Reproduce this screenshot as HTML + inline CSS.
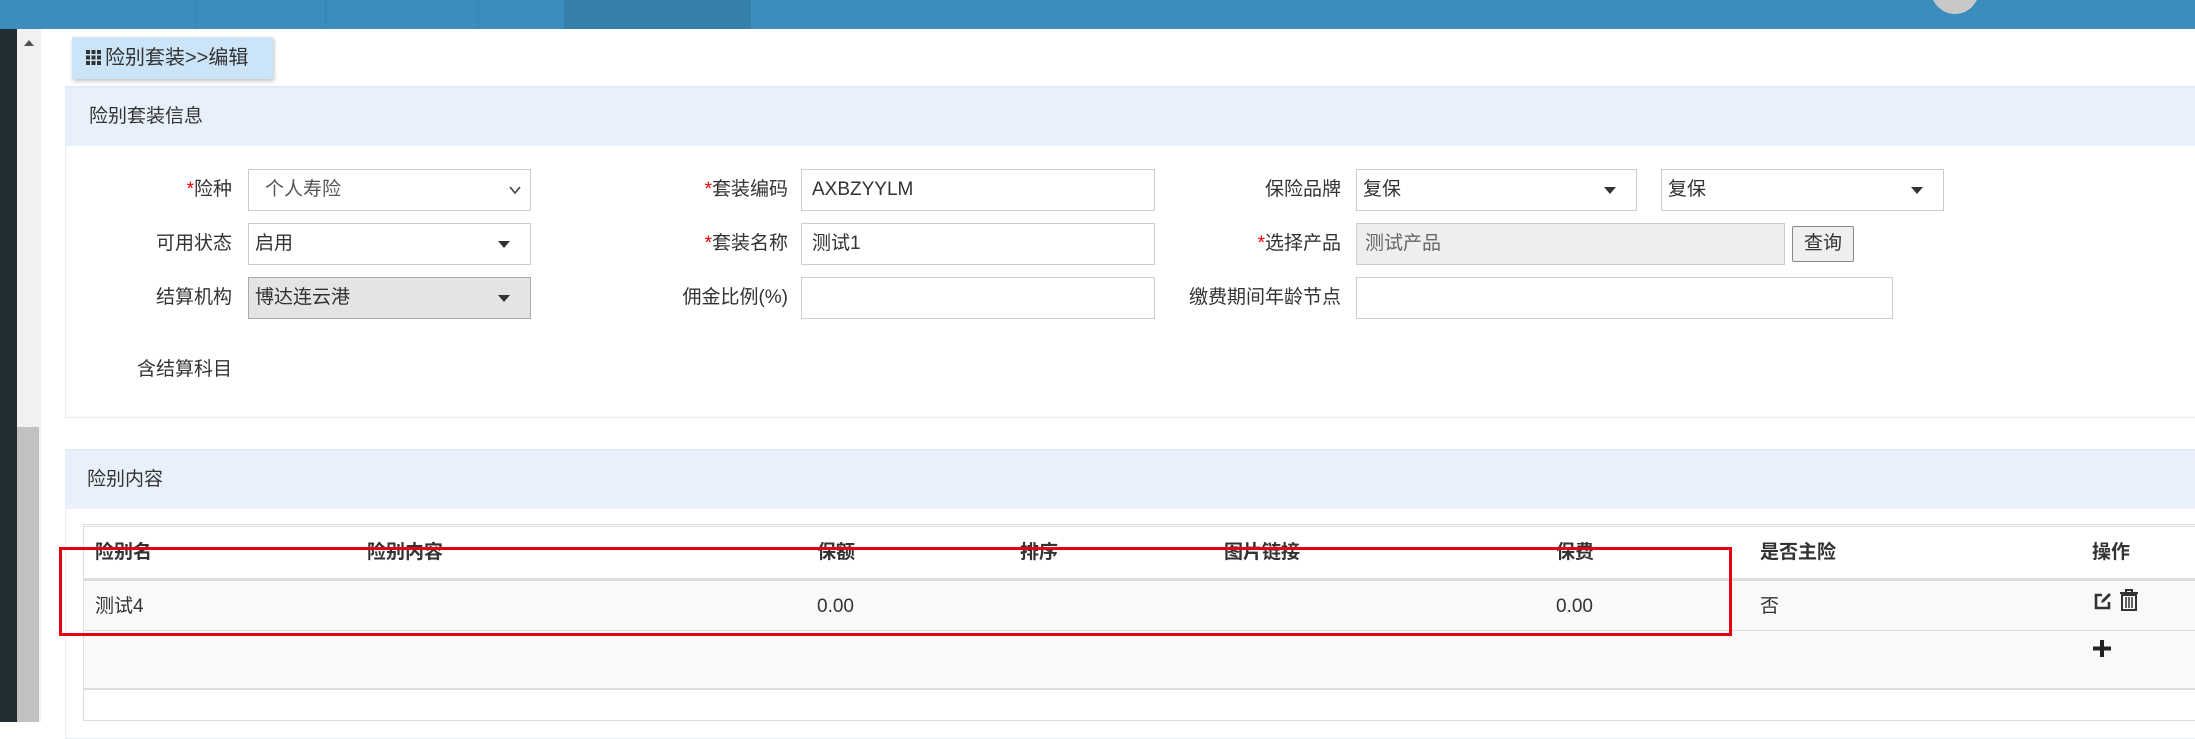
<!DOCTYPE html>
<html><head><meta charset="utf-8"><style>
*{margin:0;padding:0;box-sizing:border-box}
body{width:2195px;height:722px;overflow:hidden;background:#fff;position:relative;font-family:"Liberation Sans","Noto Sans CJK SC",sans-serif;font-size:19px;color:#333}
.a{position:absolute}
.lbl{position:absolute;text-align:right;white-space:nowrap;line-height:42px;height:42px}
.lbl i{color:#e00;font-style:normal}
.inp{position:absolute;height:42px;border:1px solid #ccc;background:#fff;line-height:40px;padding-left:14px;white-space:nowrap}
.tri{position:absolute;right:20px;top:17px;width:0;height:0;border-left:6px solid transparent;border-right:6px solid transparent;border-top:7px solid #333}
.th{position:absolute;top:541px;font-weight:bold;color:#333;line-height:24px}
.td{position:absolute;top:595px;line-height:24px}
</style></head><body>
<div class="a" style="left:0;top:0;width:2195px;height:29px;background:#3b8dbd"></div>
<div class="a" style="left:564px;top:0;width:187px;height:29px;background:#3580ab"></div>
<div class="a" style="left:195px;top:0;width:1px;height:29px;background:#3584b2"></div>
<div class="a" style="left:325px;top:0;width:1px;height:29px;background:#3584b2"></div>
<div class="a" style="left:478px;top:0;width:1px;height:29px;background:#3584b2"></div>
<div class="a" style="left:1930px;top:-40px;width:50px;height:54px;border-radius:50%;background:#c8c8c8"></div>
<div class="a" style="left:0;top:29px;width:17px;height:693px;background:#222d32"></div>
<div class="a" style="left:17px;top:29px;width:24px;height:693px;background:#f1f1f1"></div>
<div class="a" style="left:17px;top:427px;width:22px;height:295px;background:#c1c1c1"></div>
<div class="a" style="left:24px;top:40px;width:0;height:0;border-left:5px solid transparent;border-right:5px solid transparent;border-bottom:6px solid #505050"></div>

<div class="a" style="left:72px;top:37px;width:201px;height:42px;background:#cce4f8;box-shadow:1px 2px 4px rgba(0,0,0,.25);line-height:42px;padding-left:14px;font-size:20px;white-space:nowrap">
<svg width="15" height="15" style="vertical-align:-1px;margin-right:4px" viewBox="0 0 15 15" fill="#333"><rect x="0" y="0" width="4" height="4"/><rect x="5.5" y="0" width="4" height="4"/><rect x="11" y="0" width="4" height="4"/><rect x="0" y="5.5" width="4" height="4"/><rect x="5.5" y="5.5" width="4" height="4"/><rect x="11" y="5.5" width="4" height="4"/><rect x="0" y="11" width="4" height="4"/><rect x="5.5" y="11" width="4" height="4"/><rect x="11" y="11" width="4" height="4"/></svg>险别套装&gt;&gt;编辑</div>

<div class="a" style="left:65px;top:86px;width:2140px;height:332px;border:1px solid #e6eef6;border-top:2px solid #dfeaf5"></div>
<div class="a" style="left:66px;top:88px;width:2129px;height:58px;background:#e8f1fb;line-height:58px;padding-left:23px;font-size:19px">险别套装信息</div>

<div class="lbl" style="left:100px;width:132px;top:169px"><i>*</i>险种</div>
<div class="inp" style="left:248px;top:169px;width:283px;padding-left:16px;color:#555">个人寿险<svg class="a" style="right:8px;top:14px" width="14" height="12" viewBox="0 0 14 12"><path d="M2 3l5 6 5-6" stroke="#444" stroke-width="1.6" fill="none"/></svg></div>
<div class="lbl" style="left:100px;width:132px;top:223px">可用状态</div>
<div class="inp" style="left:248px;top:223px;width:283px;padding-left:6px">启用<span class="tri"></span></div>
<div class="lbl" style="left:100px;width:132px;top:277px">结算机构</div>
<div class="inp" style="left:248px;top:277px;width:283px;padding-left:6px;background:#e4e4e4;border-color:#aaa">博达连云港<span class="tri"></span></div>
<div class="lbl" style="left:100px;width:132px;top:349px">含结算科目</div>

<div class="lbl" style="left:620px;width:168px;top:169px"><i>*</i>套装编码</div>
<div class="inp" style="left:801px;top:169px;width:354px;padding-left:10px">AXBZYYLM</div>
<div class="lbl" style="left:620px;width:168px;top:223px"><i>*</i>套装名称</div>
<div class="inp" style="left:801px;top:223px;width:354px;padding-left:10px">测试1</div>
<div class="lbl" style="left:620px;width:168px;top:277px">佣金比例(%)</div>
<div class="inp" style="left:801px;top:277px;width:354px"></div>

<div class="lbl" style="left:1160px;width:181px;top:169px">保险品牌</div>
<div class="inp" style="left:1356px;top:169px;width:281px;padding-left:6px">复保<span class="tri"></span></div>
<div class="inp" style="left:1661px;top:169px;width:283px;padding-left:6px">复保<span class="tri"></span></div>
<div class="lbl" style="left:1160px;width:181px;top:223px"><i>*</i>选择产品</div>
<div class="inp" style="left:1356px;top:223px;width:429px;padding-left:8px;background:#eee;color:#666">测试产品</div>
<div class="a" style="left:1792px;top:226px;width:62px;height:36px;border:1px solid #888;border-radius:2px;background:#efefef;text-align:center;line-height:34px">查询</div>
<div class="lbl" style="left:1160px;width:181px;top:277px">缴费期间年龄节点</div>
<div class="inp" style="left:1356px;top:277px;width:537px"></div>

<div class="a" style="left:65px;top:449px;width:2140px;height:290px;border:1px solid #e6eef6;border-top:2px solid #dfeaf5"></div>
<div class="a" style="left:66px;top:451px;width:2129px;height:58px;background:#e8f1fb;line-height:58px;padding-left:21px;font-size:19px">险别内容</div>

<div class="a" style="left:83px;top:524px;width:2120px;height:197px;border:1px solid #ddd;border-top:3px double #ddd"></div>
<div class="a" style="left:84px;top:578px;width:2111px;height:3px;background:#ddd"></div>
<div class="a" style="left:84px;top:581px;width:2111px;height:108px;background:#f9f9f9"></div>
<div class="a" style="left:84px;top:630px;width:2111px;height:1px;background:#ddd"></div>
<div class="a" style="left:84px;top:688px;width:2111px;height:2px;background:#ddd"></div>

<div class="th" style="left:95px">险别名</div>
<div class="th" style="left:367px">险别内容</div>
<div class="th" style="left:817px">保额</div>
<div class="th" style="left:1020px">排序</div>
<div class="th" style="left:1224px">图片链接</div>
<div class="th" style="left:1556px">保费</div>
<div class="th" style="left:1760px">是否主险</div>
<div class="th" style="left:2092px">操作</div>

<div class="td" style="left:95px">测试4</div>
<div class="td" style="left:817px">0.00</div>
<div class="td" style="left:1556px">0.00</div>
<div class="td" style="left:1760px">否</div>
<svg class="a" style="left:2093px;top:591px" width="20" height="20" viewBox="0 0 20 20"><path d="M9 4H3v13h13v-6" stroke="#333" stroke-width="2.6" fill="none"/><path d="M8 12l1-3 7-7 2 2-7 7z" fill="#333"/></svg>
<svg class="a" style="left:2119px;top:589px" width="20" height="22" viewBox="0 0 20 22"><path d="M1 4h18M7 4V1h6v3" stroke="#333" stroke-width="2" fill="none"/><path d="M3 6h14v15H3z" stroke="#333" stroke-width="2" fill="none"/><path d="M7 8v11M10 8v11M13 8v11" stroke="#333" stroke-width="1.5"/></svg>
<svg class="a" style="left:2093px;top:640px" width="18" height="17" viewBox="0 0 18 17"><path d="M9 0v17M0 8.5h18" stroke="#222" stroke-width="4"/></svg>

<div class="a" style="left:59px;top:547px;width:1673px;height:89px;border:3px solid #e60012"></div>
</body></html>
